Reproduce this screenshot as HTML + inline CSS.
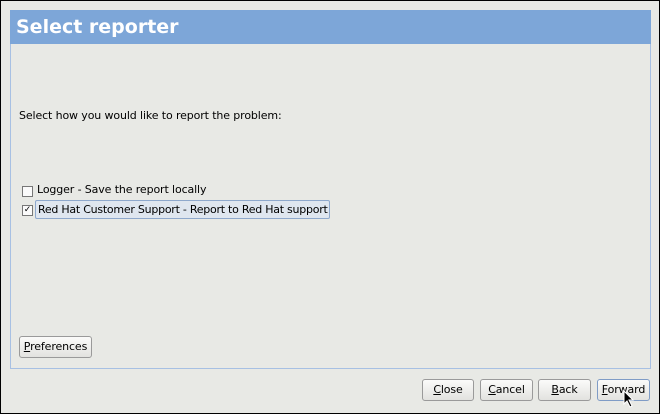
<!DOCTYPE html>
<html><head><style>
body{margin:0;width:660px;height:414px;overflow:hidden;background:#000;font-family:"DejaVu Sans","Liberation Sans",sans-serif;font-size:11px;color:#000;letter-spacing:-0.12px}
#win{position:absolute;left:1px;top:1px;width:658px;height:412px;background:#e8e9e5}
#head{position:absolute;left:9px;top:9px;width:641px;height:34px;background:#7da6d8;color:#fff;font-weight:bold;font-size:19px;line-height:34px;padding-left:6px;box-sizing:border-box;letter-spacing:0}
#panel{position:absolute;left:9px;top:43px;width:641px;height:325px;border:1px solid #a7c0e3;border-top:none;box-sizing:border-box}
.t{position:absolute;white-space:nowrap}
.cb{position:absolute;width:9px;height:9px;border:1px solid #777;background:#fafafa;font-size:9px;line-height:9px;text-align:center}
.btn{position:absolute;height:22px;border:1px solid #9a9a9a;border-radius:3px;background:linear-gradient(#fbfbfa,#e2e2df);box-sizing:border-box;text-align:center;line-height:20px}
u{text-decoration:underline}
</style></head><body><div id="win">
<div id="head">Select reporter</div>
<div id="panel"></div>
<div class="t" style="left:18px;top:108px">Select how you would like to report the problem:</div>
<div class="cb" style="left:21px;top:185px"></div>
<div class="t" style="left:36px;top:182px">Logger - Save the report locally</div>
<div class="cb" style="left:21px;top:204px">✓</div>
<div class="t" style="left:34px;top:199px;width:291px;height:17px;border:1px solid #8ea8cc;background:#dfe6ef;border-radius:2px;padding-left:2px;line-height:17px;letter-spacing:-0.25px">Red Hat Customer Support - Report to Red Hat support</div>
<div class="btn" style="left:18px;top:335px;width:73px"><u>P</u>references</div>
<div class="btn" style="left:421px;top:378px;width:52px"><u>C</u>lose</div>
<div class="btn" style="left:479px;top:378px;width:53px"><u>C</u>ancel</div>
<div class="btn" style="left:537px;top:378px;width:53px"><u>B</u>ack</div>
<div class="btn" style="left:596px;top:378px;width:53px;border-color:#7f9cc6"><u>F</u>orward</div>
<svg style="position:absolute;left:622px;top:389px" width="12" height="18"><path d="M1 1 L1 14 L4 11 L7 17 L9 16 L6 10 L10 10 Z" fill="#000" stroke="#fff" stroke-width="1"/></svg>
</div></body></html>
